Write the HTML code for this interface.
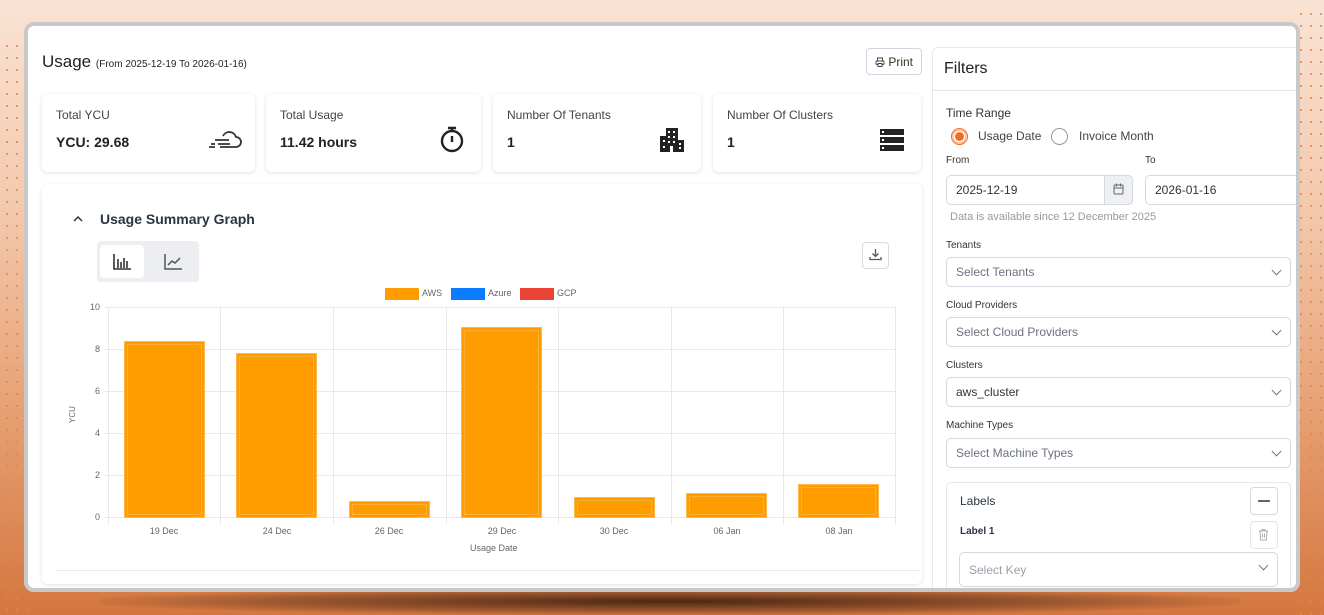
<!DOCTYPE html>
<html style="width:1324px;height:615px;overflow:hidden"><head><meta charset="utf-8"><style>
*{box-sizing:border-box;margin:0;padding:0}
body{width:1324px;height:615px;overflow:hidden;position:relative;font-family:"Liberation Sans",sans-serif;color:#222;
background:linear-gradient(180deg,#f9e3d4 0%,#f3c8ab 35%,#e59c6e 70%,#d4773f 100%);}
.dots{position:absolute;top:0;width:30px;height:615px;background-image:radial-gradient(circle,#e8824a 1px,transparent 1.3px);background-size:10px 12px;opacity:.8}
.shadow{position:absolute;left:100px;top:588px;width:1140px;height:27px;background:radial-gradient(ellipse at center,rgba(50,25,10,.85) 0%,rgba(80,40,20,.4) 50%,transparent 75%)}
.win{position:absolute;left:24px;top:22px;width:1276px;height:570px;background:#fff;border-radius:10px}
.frame{position:absolute;left:24px;top:22px;width:1276px;height:570px;border:4px solid #c9c9c9;border-radius:10px;z-index:10;box-shadow:0 0 0 30px transparent}
.a{position:absolute}
.card{position:absolute;background:#fff;border-radius:6px;box-shadow:0 1px 4px rgba(0,0,0,.12)}
.ct{position:absolute;left:14px;top:14px;font-size:12px;color:#444}
.cv{position:absolute;left:14px;top:40px;font-size:14px;font-weight:bold;color:#222}
.lbl{position:absolute;font-size:11px;color:#333}
.sel{position:absolute;height:30px;border:1px solid #d5d8de;border-radius:5px;font-size:12px;color:#6b7280;padding:7px 9px;background:#fff}
.dd:after{content:"";position:absolute;right:10px;top:9px;width:6px;height:6px;border-right:1.2px solid #777;border-bottom:1.2px solid #777;transform:rotate(45deg)}
.xl{position:absolute;font-size:9px;color:#666;top:526px;width:60px;text-align:center}
.yl{position:absolute;font-size:9px;color:#666;left:84px;width:16px;text-align:right}
.bar{position:absolute;background:#ff9c00;border:1px solid #ffb84d;box-shadow:inset 0 0 0 2px #ff9c00,inset 0 0 0 3px #ffae33}
.clip{position:absolute;left:28px;top:26px;width:1268px;height:562px;overflow:hidden}
.clip>*{}
</style></head><body>
<div class="dots" style="left:2px;top:40px;height:575px"></div>
<div class="dots" style="left:1296px;top:8px;"></div>
<div class="shadow"></div>
<div class="win"></div>
<div class="frame"></div>
<div class="clip"><div style="position:absolute;left:-28px;top:-26px;width:1324px;height:615px">
<div class="a" style="left:42px;top:52px;font-size:17px;color:#222">Usage <span style="font-size:10px">(From 2025-12-19 To 2026-01-16)</span></div>
<div class="a" style="left:866px;top:48px;width:56px;height:27px;border:1px solid #cfd6e0;border-radius:4px;font-size:12px;padding:6px 0 0 8px;color:#333"><svg width="10" height="10" viewBox="0 0 10 10" style="vertical-align:-1px"><rect x="2.5" y="1" width="5" height="3" fill="none" stroke="#444"/><rect x="1" y="4" width="8" height="3.5" rx="1" fill="none" stroke="#444"/><rect x="3" y="6.5" width="4" height="3" fill="#fff" stroke="#444"/></svg> Print</div>

<div class="card" style="left:42px;top:94px;width:213px;height:78px"><div class="ct">Total YCU</div><div class="cv">YCU: 29.68</div>
<svg class="a" style="left:164px;top:36px" width="36" height="22" viewBox="0 0 36 22"><path d="M14 17h16a5 5 0 0 0 0-10 7 7 0 0 0-13-1" fill="none" stroke="#333" stroke-width="1.8"/><path d="M9 10h14M12 14h12M5 14h4M3 17h6" stroke="#333" stroke-width="1.8"/></svg></div>
<div class="card" style="left:266px;top:94px;width:215px;height:78px"><div class="ct">Total Usage</div><div class="cv">11.42 hours</div>
<svg class="a" style="left:173px;top:31px" width="26" height="28" viewBox="0 0 26 28"><circle cx="13" cy="16" r="10" fill="none" stroke="#222" stroke-width="2.4"/><path d="M9 3h8M13 3v3M13 11v6" stroke="#222" stroke-width="2.4"/></svg></div>
<div class="card" style="left:493px;top:94px;width:208px;height:78px"><div class="ct">Number Of Tenants</div><div class="cv">1</div>
<svg class="a" style="left:167px;top:34px" width="24" height="24" viewBox="0 0 24 24"><path d="M0 8h6V0h12v12h6v12H0z" fill="#222"/><g fill="#fff"><rect x="8" y="3" width="2" height="2"/><rect x="13" y="3" width="2" height="2"/><rect x="8" y="8" width="2" height="2"/><rect x="13" y="8" width="2" height="2"/><rect x="3" y="12" width="2" height="2"/><rect x="8" y="13" width="2" height="2"/><rect x="13" y="13" width="2" height="2"/><rect x="19" y="15" width="2" height="2"/><rect x="3" y="18" width="2" height="2"/><rect x="19" y="19" width="2" height="2"/><rect x="10" y="18" width="3" height="6"/></g></svg></div>
<div class="card" style="left:713px;top:94px;width:208px;height:78px"><div class="ct">Number Of Clusters</div><div class="cv">1</div>
<svg class="a" style="left:167px;top:35px" width="24" height="22" viewBox="0 0 24 22"><g fill="#222"><rect y="0" width="24" height="6"/><rect y="8" width="24" height="6"/><rect y="16" width="24" height="6"/></g><g fill="#fff"><rect x="2" y="2" width="2" height="2"/><rect x="2" y="10" width="2" height="2"/><rect x="2" y="18" width="2" height="2"/></g></svg></div>

<div class="card" style="left:42px;top:184px;width:880px;height:400px"></div>
<div class="a" style="left:56px;top:570px;width:864px;height:1px;background:#e5e8ee"></div>
<svg class="a" style="left:72px;top:214px" width="12" height="10"><path d="M2 7l4-4 4 4" fill="none" stroke="#333" stroke-width="1.5"/></svg>
<div class="a" style="left:100px;top:211px;font-size:14px;font-weight:bold;color:#2b3445">Usage Summary Graph</div>
<div class="a" style="left:97px;top:241px;width:102px;height:41px;background:#eceef1;border-radius:4px"></div>
<div class="a" style="left:100px;top:245px;width:44px;height:33px;background:#fff;border-radius:4px"></div>
<svg class="a" style="left:113px;top:254px" width="18" height="16" viewBox="0 0 18 16"><path d="M1 0v15h17M5 5v9M8 8v6M11 4v10M14 7v7" stroke="#333" stroke-width="1.6" fill="none"/></svg>
<svg class="a" style="left:164px;top:254px" width="18" height="16" viewBox="0 0 18 16"><path d="M1 0v15h17M4 11l4-4 3 2 5-5" stroke="#555" stroke-width="1.5" fill="none"/></svg>
<div class="a" style="left:862px;top:242px;width:27px;height:27px;border:1px solid #d5dbe4;border-radius:4px"></div>
<svg class="a" style="left:869px;top:248px" width="13" height="13" viewBox="0 0 13 13"><path d="M6.5 1v7M3.5 5.5l3 3 3-3M1 9v2.5h11V9" fill="none" stroke="#555" stroke-width="1.3"/></svg>

<div class="a" style="left:385px;top:288px;width:34px;height:12px;background:#ff9c00"></div><div class="a" style="left:422px;top:288px;font-size:9px;color:#666">AWS</div>
<div class="a" style="left:451px;top:288px;width:34px;height:12px;background:#0a7cff"></div><div class="a" style="left:488px;top:288px;font-size:9px;color:#666">Azure</div>
<div class="a" style="left:520px;top:288px;width:34px;height:12px;background:#ea4335"></div><div class="a" style="left:557px;top:288px;font-size:9px;color:#666">GCP</div>

<svg class="a" style="left:100px;top:300px" width="800" height="225">
<g stroke="#e6e8ec" stroke-width="1">
<path d="M5 7.5h790M5 49.5h790M5 91.5h790M5 133.5h790M5 175.5h790M5 217.5h790"/>
<path d="M8.5 7v217M120.5 7v217M233.5 7v217M346.5 7v217M458.5 7v217M571.5 7v217M683.5 7v217M795.5 7v217"/>
</g></svg>
<div class="yl" style="top:302px">10</div><div class="yl" style="top:344px">8</div><div class="yl" style="top:386px">6</div><div class="yl" style="top:428px">4</div><div class="yl" style="top:470px">2</div><div class="yl" style="top:512px">0</div>
<div class="a" style="left:64px;top:410px;font-size:8px;color:#666;transform:rotate(-90deg)">YCU</div>
<div class="bar" style="left:124px;top:341px;width:81px;height:177px"></div>
<div class="bar" style="left:236px;top:353px;width:81px;height:165px"></div>
<div class="bar" style="left:349px;top:501px;width:81px;height:17px"></div>
<div class="bar" style="left:461px;top:327px;width:81px;height:191px"></div>
<div class="bar" style="left:574px;top:497px;width:81px;height:21px"></div>
<div class="bar" style="left:686px;top:493px;width:81px;height:25px"></div>
<div class="bar" style="left:798px;top:484px;width:81px;height:34px"></div>
<div class="xl" style="left:134px">19 Dec</div><div class="xl" style="left:247px">24 Dec</div><div class="xl" style="left:359px">26 Dec</div><div class="xl" style="left:472px">29 Dec</div><div class="xl" style="left:584px">30 Dec</div><div class="xl" style="left:697px">06 Jan</div><div class="xl" style="left:809px">08 Jan</div>
<div class="a" style="left:470px;top:543px;font-size:9px;color:#666">Usage Date</div>

<!-- filters -->
<div class="a" style="left:932px;top:47px;width:380px;height:560px;border:1px solid #e6e8ec;border-radius:6px 0 0 0"></div>
<div class="a" style="left:932px;top:90px;width:380px;height:1px;background:#e3e6ea"></div>
<div class="a" style="left:944px;top:60px;font-size:16px;color:#222">Filters</div>
<div class="lbl" style="left:946px;top:106px;font-size:12px">Time Range</div>
<div class="a" style="left:951px;top:128px;width:17px;height:17px;border-radius:50%;border:1.5px solid #f26b2a"></div>
<div class="a" style="left:955px;top:132px;width:9px;height:9px;border-radius:50%;background:#f26b2a;box-shadow:0 0 0 1.5px #fff,0 0 0 2.5px #f6a070"></div>
<div class="lbl" style="left:978px;top:129px;font-size:12px;color:#444">Usage Date</div>
<div class="a" style="left:1051px;top:128px;width:17px;height:17px;border-radius:50%;border:1px solid #999"></div>
<div class="lbl" style="left:1079px;top:129px;font-size:12px;color:#444">Invoice Month</div>
<div class="lbl" style="left:946px;top:155px;font-size:10px">From</div>
<div class="lbl" style="left:1145px;top:155px;font-size:10px">To</div>
<div class="sel" style="left:946px;top:175px;width:187px;color:#333;border-radius:5px"> 2025-12-19</div>
<div class="a" style="left:1104px;top:175px;width:29px;height:30px;background:#eef0f3;border:1px solid #d5d8de;border-radius:0 5px 5px 0"></div>
<svg class="a" style="left:1113px;top:183px" width="11" height="12" viewBox="0 0 11 12"><rect x="1" y="2" width="9" height="9" rx="1" fill="none" stroke="#666"/><path d="M1 5h9M3.5 0.5v3M7.5 0.5v3" stroke="#666"/></svg>
<div class="sel" style="left:1145px;top:175px;width:170px;color:#333">2026-01-16</div>
<div class="lbl" style="left:950px;top:211px;color:#999">Data is available since 12 December 2025</div>
<div class="lbl" style="left:946px;top:240px;font-size:10px">Tenants</div>
<div class="sel dd" style="left:946px;top:257px;width:345px">Select Tenants</div>
<div class="lbl" style="left:946px;top:300px;font-size:10px">Cloud Providers</div>
<div class="sel dd" style="left:946px;top:317px;width:345px">Select Cloud Providers</div>
<div class="lbl" style="left:946px;top:360px;font-size:10px">Clusters</div>
<div class="sel dd" style="left:946px;top:377px;width:345px;color:#333">aws_cluster</div>
<div class="lbl" style="left:946px;top:420px;font-size:10px">Machine Types</div>
<div class="sel dd" style="left:946px;top:438px;width:345px">Select Machine Types</div>
<div class="a" style="left:946px;top:482px;width:345px;height:120px;border:1px solid #e3e6ea;border-radius:5px"></div>
<div class="lbl" style="left:960px;top:494px;font-size:12px;color:#2b3445">Labels</div>
<div class="a" style="left:1250px;top:487px;width:28px;height:28px;border:1px solid #d5d8de;border-radius:4px"></div>
<div class="a" style="left:1258px;top:500px;width:12px;height:1.5px;background:#666"></div>
<div class="lbl" style="left:960px;top:526px;font-size:10px;color:#2b3445;font-weight:bold">Label 1</div>
<div class="a" style="left:1250px;top:521px;width:28px;height:28px;border:1px solid #e3e6ea;border-radius:4px"></div>
<svg class="a" style="left:1258px;top:528px" width="11" height="13" viewBox="0 0 11 13"><path d="M1 3h9M4 3V1.5h3V3M2 3l.7 9h5.6L9 3M4.5 5.5v4M6.5 5.5v4" fill="none" stroke="#aaa"/></svg>
<div class="sel dd" style="left:959px;top:552px;width:319px;height:35px;padding-top:10px;color:#9aa0a8">Select Key</div>
</div></div>
</body></html>
